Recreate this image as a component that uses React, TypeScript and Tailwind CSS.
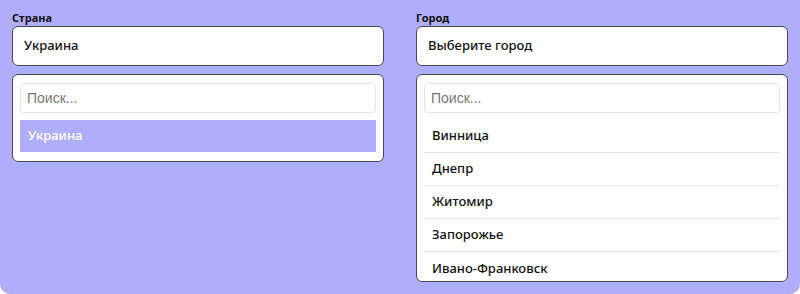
const cities = ["Винница", "Днепр", "Житомир", "Запорожье", "Ивано-Франковск"];

function Field({
  label,
  value,
  children,
}: {
  label: string;
  value: string;
  children: React.ReactNode;
}) {
  return (
    <div className="flex flex-col">
      <div className="h-4 text-[11px] font-bold leading-4 text-[#111]">{label}</div>
      <div className="flex h-10 items-center rounded-md border border-[#4a4a4a] bg-white px-[11px] text-[13px] font-medium text-[#111]">
        {value}
      </div>
      <div className="mt-2 rounded-md border border-[#4a4a4a] bg-white px-[7px] pt-2">{children}</div>
    </div>
  );
}

function Search() {
  return (
    <input
      placeholder="Поиск..."
      className="h-[30px] w-full rounded border border-[#e4e4e4] px-[6px] text-[14px] outline-none placeholder:text-[#777]"
      style={{ fontFamily: '"Liberation Sans", Arial, sans-serif' }}
    />
  );
}

export default function App() {
  return (
    <div
      className="grid h-[294px] w-[800px] grid-cols-2 items-start gap-8 rounded-b-[10px] bg-[#afaefa] px-3 pt-[10px]"
      style={{ fontFamily: '"Noto Sans", sans-serif' }}
    >
      <Field label="Страна" value="Украина">
        <Search />
        <div className="mt-[7px] mb-[9px] flex h-8 items-center bg-[#afaefa] px-2 text-[13px] font-medium text-white">
          Украина
        </div>
      </Field>
      <Field label="Город" value="Выберите город">
        <Search />
        <div className="mt-[7px] h-[161px] overflow-hidden">
          {cities.map((c, i) => (
            <div
              key={i}
              className="flex h-[33px] items-center border-b border-[#e4e4e4] px-2 text-[13px] font-medium text-[#111] last:border-b-0"
            >
              {c}
            </div>
          ))}
        </div>
      </Field>
    </div>
  );
}
